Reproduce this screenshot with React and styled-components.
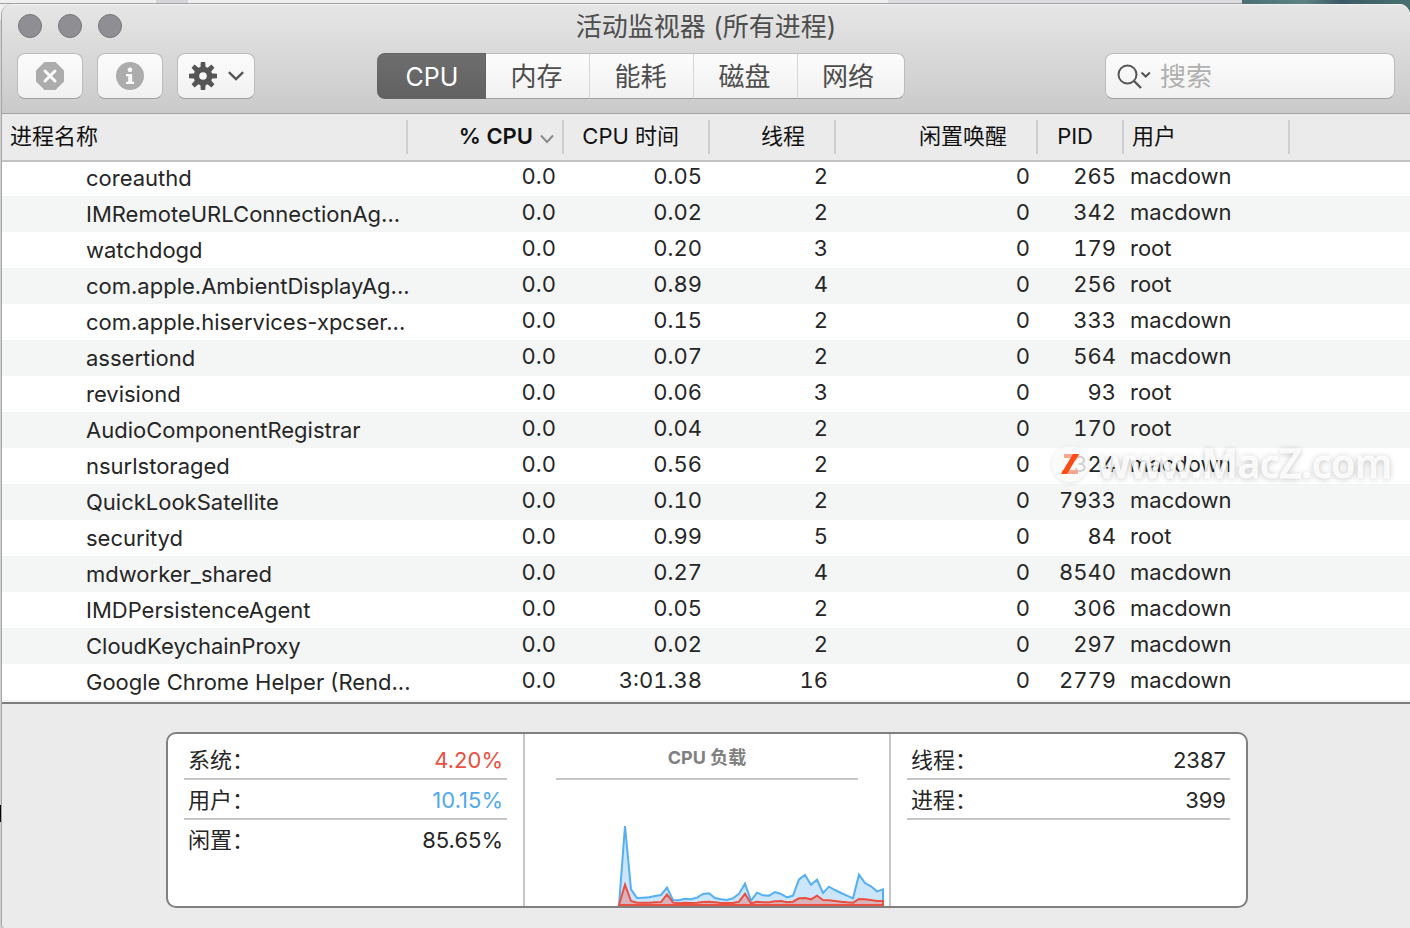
import React, { useState } from 'react';
import styled, { createGlobalStyle, css } from 'styled-components';

const GlobalStyle = createGlobalStyle`
  * {
    box-sizing: border-box;
  }

  body {
    margin: 0;
    background: #c9c9c9;
    font-family: Inter, "Noto Sans CJK SC", sans-serif;
    color: #262626;
  }

  button, input {
    font-family: inherit;
  }
`;

/* Strip of the desktop that shows above and beside the window */
const Desktop = styled.div`
  min-height: 100vh;
  display: flex;
  flex-direction: column;
  padding: 4px 0 0 1px;
  background:
    linear-gradient(#000, #000) 0 805px / 1px 17px no-repeat,
    linear-gradient(#a2a2a4, #a2a2a4) 0 3px / 1242px 1px no-repeat,
    linear-gradient(90deg, #efeff0 156px, #d6d6da 156px, #d6d6da 188px, #efeff0 188px, #efeff0 888px, #dcdce0 888px, #dcdce0 1242px, #4a7074 1242px, #5d8284 1305px, #3c5a66 1340px, #48706f) 0 0 / 100% 20px no-repeat,
    #d0d0d0;
`;

const Window = styled.main`
  position: relative;
  flex: 1;
  display: flex;
  flex-direction: column;
  overflow: hidden;
  border-left: 1px solid #a6a6a6;
  border-radius: 11px 11px 0 4px;
  background: #ebebeb;
`;

const Toolbar = styled.header`
  padding: 10px 15px 14px;
  border-bottom: 1px solid #a3a3a3;
  background: linear-gradient(#e6e6e6, #cacaca);
  box-shadow: inset 0 1px 0 #f2f2f2;
`;

const TitleBar = styled.div`
  display: grid;
  grid-template-columns: 1fr auto 1fr;
  align-items: start;
  height: 24px;
  margin-bottom: 15px;
`;

const Lights = styled.div`
  display: flex;
  gap: 16px;
  padding-left: 1px;
`;

const Light = styled.button`
  width: 24px;
  height: 24px;
  padding: 0;
  border: 1px solid #77777b;
  border-radius: 50%;
  background: #8f8e93;
`;

const Title = styled.h1`
  margin: 0;
  font-size: 26px;
  line-height: 26px;
  font-weight: 400;
  color: #4d4d4d;
`;

const Controls = styled.div`
  display: flex;
  align-items: center;
`;

const face = css`
  border: 1px solid #bcbcbc;
  border-bottom-color: #9e9e9e;
  border-radius: 8px;
  background: linear-gradient(#fcfcfc, #f1f1f1);
`;

const ToolButtons = styled.div`
  display: flex;
  gap: 14px;
`;

const ToolButton = styled.button`
  ${face}
  display: flex;
  align-items: center;
  justify-content: center;
  gap: 11px;
  width: ${(props) => (props.$wide ? '78px' : '66px')};
  height: 46px;
  padding: 0;
`;

const Tabs = styled.div`
  display: flex;
  height: 46px;
  margin-left: 122px;
`;

const Tab = styled.button`
  ${face}
  width: ${(props) => (props.$active ? '109px' : '104px')};
  padding: 2px 2px 0 0;
  border-left: 0;
  border-right-color: #d6d6d6;
  border-radius: 0;
  font-size: 26px;
  line-height: 42px;
  color: #4d4d4d;

  &:first-child {
    border-radius: 8px 0 0 8px;
  }

  &:last-child {
    width: 107px;
    padding-right: 6px;
    border-right-color: #bcbcbc;
    border-radius: 0 8px 8px 0;
  }

  ${(props) =>
    props.$active &&
    css`
      padding: 2px 0 0 2px;
      border-color: #636363;
      background: linear-gradient(#6e6e6e, #616161);
      font-size: 25px;
      color: #fff;
    `}
`;

const Search = styled.label`
  ${face}
  display: flex;
  align-items: center;
  gap: 9px;
  width: 290px;
  height: 46px;
  margin-left: auto;
  padding-left: 11px;
`;

const SearchInput = styled.input`
  flex: 1;
  min-width: 0;
  padding: 2px 0 0;
  border: 0;
  outline: 0;
  background: none;
  font-size: 26px;
  line-height: 40px;

  &::placeholder {
    color: #b0b0b0;
    opacity: 1;
  }
`;

const TableArea = styled.div`
  position: relative;
  padding-bottom: 2px;
  border-bottom: 2px solid #7f7f7f;
  background: #f4f5f5;
`;

const Table = styled.table`
  width: 100%;
  table-layout: fixed;
  border-collapse: separate;
  border-spacing: 0;
`;

const HeadCell = styled.th`
  height: 48px;
  padding: 0 ${(props) => (props.$sorted ? '10px' : '31px')} 2px 8px;
  border-bottom: 2px solid #c2c2c2;
  background: ${(props) =>
      props.$last ? 'none' : 'linear-gradient(#cfcfcf, #cfcfcf) right center / 2px 34px no-repeat'},
    #ebebeb;
  font-size: 22px;
  line-height: 32px;
  font-weight: ${(props) => (props.$sorted ? 600 : 400)};
  text-align: ${(props) => props.$align};
  white-space: nowrap;
  color: #111;
`;

const SortMark = styled.svg`
  margin-left: 7px;
`;

const Row = styled.tr`
  height: 36px;
  background: #fff;

  &:nth-child(even) {
    background: #f4f5f5;
  }

  &:first-child {
    height: 34px;
  }
`;

const Cell = styled.td`
  padding: 0 8px 6px 6px;
  font-size: 22px;
  line-height: 28px;
  font-variant-numeric: tabular-nums;
  text-align: ${(props) => props.$align};
  vertical-align: bottom;
  white-space: nowrap;
`;

const NameCell = styled(Cell)`
  padding: 0 0 4px 84px;
  font-variant-numeric: normal;
`;

const Watermark = styled.div`
  position: absolute;
  top: 325px;
  right: 18px;
  display: flex;
  align-items: center;
  gap: 10px;
  height: 50px;
  font-family: "Noto Sans", sans-serif;
  font-size: 39px;
  line-height: 46px;
  font-weight: 500;
  color: rgba(255, 255, 255, 0.85);
  -webkit-text-stroke: 1px rgba(255, 255, 255, 0.85);
  text-shadow: 0 1px 6px rgba(0, 0, 0, 0.3);
  pointer-events: none;
`;

const WatermarkText = styled.span`
  padding-bottom: 2px;
`;

const Badge = styled.svg`
  border-radius: 50%;
  background: rgba(250, 250, 250, 0.8);
  box-shadow: 0 1px 4px rgba(0, 0, 0, 0.12);
`;

const Summary = styled.section`
  display: grid;
  grid-template-columns: 357fr 366fr 355fr;
  height: 176px;
  margin: 28px 162px 20px 164px;
  border: 2px solid #808080;
  border-radius: 10px;
  background: #fff;
  overflow: hidden;
`;

const Pane = styled.div`
  padding: 6px 16px 0;
  border-right: ${(props) => (props.$last ? '0' : '2px solid #c6c6c6')};
`;

const StatList = styled.dl`
  margin: 0;
`;

const Stat = styled.div`
  display: flex;
  justify-content: space-between;
  height: 40px;
  padding: 0 4px;
  border-bottom: 2px solid ${(props) => (props.$plain ? 'transparent' : '#c6c6c6')};
  font-size: 22px;
  line-height: 40px;
`;

const StatValue = styled.dd`
  margin: 0;
  color: ${(props) => props.$color || '#262626'};
`;

const ChartPane = styled(Pane)`
  display: flex;
  flex-direction: column;
  padding: 6px 0 0;
`;

const ChartTitle = styled.h2`
  height: 40px;
  margin: 0 31px;
  border-bottom: 2px solid #c6c6c6;
  font-size: 18px;
  line-height: 36px;
  font-weight: 700;
  text-align: center;
  color: #808080;
`;

const columns = [
  { label: '进程名称', width: 406, align: 'left' },
  { label: '% CPU', width: 156, align: 'right', sorted: true },
  { label: 'CPU 时间', width: 146, align: 'right' },
  { label: '线程', width: 126, align: 'right' },
  { label: '闲置唤醒', width: 202, align: 'right' },
  { label: 'PID', width: 86, align: 'right' },
  { label: '用户', width: 166, align: 'left' },
];

const processes = [
  ['coreauthd', '0.0', '0.05', 2, 0, 265, 'macdown'],
  ['IMRemoteURLConnectionAg...', '0.0', '0.02', 2, 0, 342, 'macdown'],
  ['watchdogd', '0.0', '0.20', 3, 0, 179, 'root'],
  ['com.apple.AmbientDisplayAg...', '0.0', '0.89', 4, 0, 256, 'root'],
  ['com.apple.hiservices-xpcser...', '0.0', '0.15', 2, 0, 333, 'macdown'],
  ['assertiond', '0.0', '0.07', 2, 0, 564, 'macdown'],
  ['revisiond', '0.0', '0.06', 3, 0, 93, 'root'],
  ['AudioComponentRegistrar', '0.0', '0.04', 2, 0, 170, 'root'],
  ['nsurlstoraged', '0.0', '0.56', 2, 0, 324, 'macdown'],
  ['QuickLookSatellite', '0.0', '0.10', 2, 0, 7933, 'macdown'],
  ['securityd', '0.0', '0.99', 5, 0, 84, 'root'],
  ['mdworker_shared', '0.0', '0.27', 4, 0, 8540, 'macdown'],
  ['IMDPersistenceAgent', '0.0', '0.05', 2, 0, 306, 'macdown'],
  ['CloudKeychainProxy', '0.0', '0.02', 2, 0, 297, 'macdown'],
  ['Google Chrome Helper (Rend...', '0.0', '3:01.38', 16, 0, 2779, 'macdown'],
];

const userLoad = [
  3, 240, 50, 24, 25, 26, 30, 33, 55, 18, 17, 22, 20, 25, 36, 38, 24, 20, 18, 23, 37, 67, 16, 40, 32,
  31, 42, 36, 26, 31, 80, 93, 64, 79, 39, 58, 48, 39, 31, 23, 94, 69, 59, 44, 50,
];

const systemLoad = [
  3, 64, 15, 10, 10, 10, 11, 12, 35, 10, 8, 10, 9, 10, 12, 13, 11, 9, 9, 9, 13, 37, 8, 13, 11, 11, 14,
  15, 11, 13, 23, 24, 20, 31, 18, 17, 15, 13, 11, 10, 21, 20, 18, 15, 15,
];

const toPoints = (load) =>
  load
    .map((value, i) => `${94 + i * 6},${126 - value / 3}`)
    .concat('358,125')
    .join(' ');

const LoadChart = () => (
  <svg width="100%" height="126" viewBox="0 0 364 126" preserveAspectRatio="xMaxYMax meet">
    <polygon points={toPoints(userLoad)} fill="#cbe5fa" stroke="#55aff0" strokeWidth="2" />
    <polygon points={toPoints(systemLoad)} fill="#d9b3bc" stroke="#ea4f41" strokeWidth="2" />
  </svg>
);

const StopIcon = () => (
  <svg width="28" height="28" viewBox="0 0 28 28">
    <path d="M8.5 0h11L28 8.5v11L19.5 28h-11L0 19.5v-11z" fill="#acacac" />
    <path d="M9 9l10 10M19 9l-10 10" stroke="#fafafa" strokeWidth="3" strokeLinecap="round" />
  </svg>
);

const InfoIcon = () => (
  <svg width="28" height="28" viewBox="0 0 28 28">
    <circle cx="14" cy="14" r="14" fill="#acacac" />
    <circle cx="14" cy="7.8" r="2.4" fill="#fafafa" />
    <path d="M10 12h6.2v7.8H18V22h-8v-2.2h2.2v-5.6H10z" fill="#fafafa" />
  </svg>
);

const GearIcon = () => (
  <svg width="28" height="28" viewBox="0 0 28 28">
    <g fill="#555">
      {[0, 45, 90, 135].map((angle) => (
        <path key={angle} d="M11.8 0h4.4l.6 8v12l-.6 8h-4.4l-.6-8V8z" transform={`rotate(${angle} 14 14)`} />
      ))}
      <circle cx="14" cy="14" r="9.4" />
    </g>
    <circle cx="14" cy="14" r="3.8" fill="#f7f7f7" />
  </svg>
);

const Chevron = () => (
  <svg width="16" height="10" viewBox="0 0 16 10" fill="none">
    <path d="M1.6 1.8L8 8l6.4-6.2" stroke="#555" strokeWidth="2.4" strokeLinecap="round" />
  </svg>
);

const SearchIcon = () => (
  <svg width="34" height="26" viewBox="0 0 34 26" fill="none" stroke="#555" strokeWidth="2">
    <circle cx="10.5" cy="11.5" r="9" />
    <path d="M17 18l7 7" strokeWidth="2.4" />
    <path d="M24.5 9.5l4.2 4 4.2-4" />
  </svg>
);

const tabs = ['CPU', '内存', '能耗', '磁盘', '网络'];

const App = () => {
  const [activeTab, setActiveTab] = useState('CPU');

  return (
    <>
      <GlobalStyle />
      <Desktop>
        <Window>
          <Toolbar>
            <TitleBar>
              <Lights>
                <Light aria-label="关闭" />
                <Light aria-label="最小化" />
                <Light aria-label="缩放" />
              </Lights>
              <Title>活动监视器 (所有进程)</Title>
            </TitleBar>
            <Controls>
              <ToolButtons>
                <ToolButton aria-label="停止">
                  <StopIcon />
                </ToolButton>
                <ToolButton aria-label="信息">
                  <InfoIcon />
                </ToolButton>
                <ToolButton $wide aria-label="选项">
                  <GearIcon />
                  <Chevron />
                </ToolButton>
              </ToolButtons>
              <Tabs>
                {tabs.map((tab) => (
                  <Tab key={tab} $active={activeTab === tab} onClick={() => setActiveTab(tab)}>
                    {tab}
                  </Tab>
                ))}
              </Tabs>
              <Search htmlFor="search">
                <SearchIcon />
                <SearchInput id="search" type="text" placeholder="搜索" aria-label="搜索" />
              </Search>
            </Controls>
          </Toolbar>

          <TableArea>
            <Table>
              <colgroup>
                {columns.map((column) => (
                  <col key={column.label} width={column.width} />
                ))}
                <col />
              </colgroup>
              <thead>
                <tr>
                  {columns.map((column) => (
                    <HeadCell key={column.label} $align={column.align} $sorted={column.sorted}>
                      {column.label}
                      {column.sorted && (
                        <SortMark width="14" height="10" viewBox="0 0 14 10" fill="none">
                          <path d="M1 1.5l6 6.5 6-6.5" stroke="#8c8c8c" strokeWidth="2" />
                        </SortMark>
                      )}
                    </HeadCell>
                  ))}
                  <HeadCell as="td" $last />
                </tr>
              </thead>
              <tbody>
                {processes.map(([name, ...values]) => (
                  <Row key={name}>
                    <NameCell $align="left">{name}</NameCell>
                    {values.map((value, i) => (
                      <Cell key={columns[i + 1].label} $align={columns[i + 1].align}>
                        {value}
                      </Cell>
                    ))}
                    <Cell />
                  </Row>
                ))}
              </tbody>
            </Table>
            <Watermark>
              <Badge width="36" height="36" viewBox="0 0 36 36">
                <path d="M12 8h15v4H12zM10 24h16v4H10z" fill="#fba68e" />
                <path d="M21 8h6L15 28H9z" fill="#fb4a16" />
              </Badge>
              <WatermarkText>www.MacZ.com</WatermarkText>
            </Watermark>
          </TableArea>

          <Summary>
            <Pane>
              <StatList>
                <Stat>
                  <dt>系统：</dt>
                  <StatValue $color="#ea4f41">4.20%</StatValue>
                </Stat>
                <Stat>
                  <dt>用户：</dt>
                  <StatValue $color="#4fa9ef">10.15%</StatValue>
                </Stat>
                <Stat $plain>
                  <dt>闲置：</dt>
                  <StatValue>85.65%</StatValue>
                </Stat>
              </StatList>
            </Pane>
            <ChartPane>
              <ChartTitle>CPU 负载</ChartTitle>
              <LoadChart />
            </ChartPane>
            <Pane $last>
              <StatList>
                <Stat>
                  <dt>线程：</dt>
                  <StatValue>2387</StatValue>
                </Stat>
                <Stat>
                  <dt>进程：</dt>
                  <StatValue>399</StatValue>
                </Stat>
              </StatList>
            </Pane>
          </Summary>
        </Window>
      </Desktop>
    </>
  );
};

export default App;
